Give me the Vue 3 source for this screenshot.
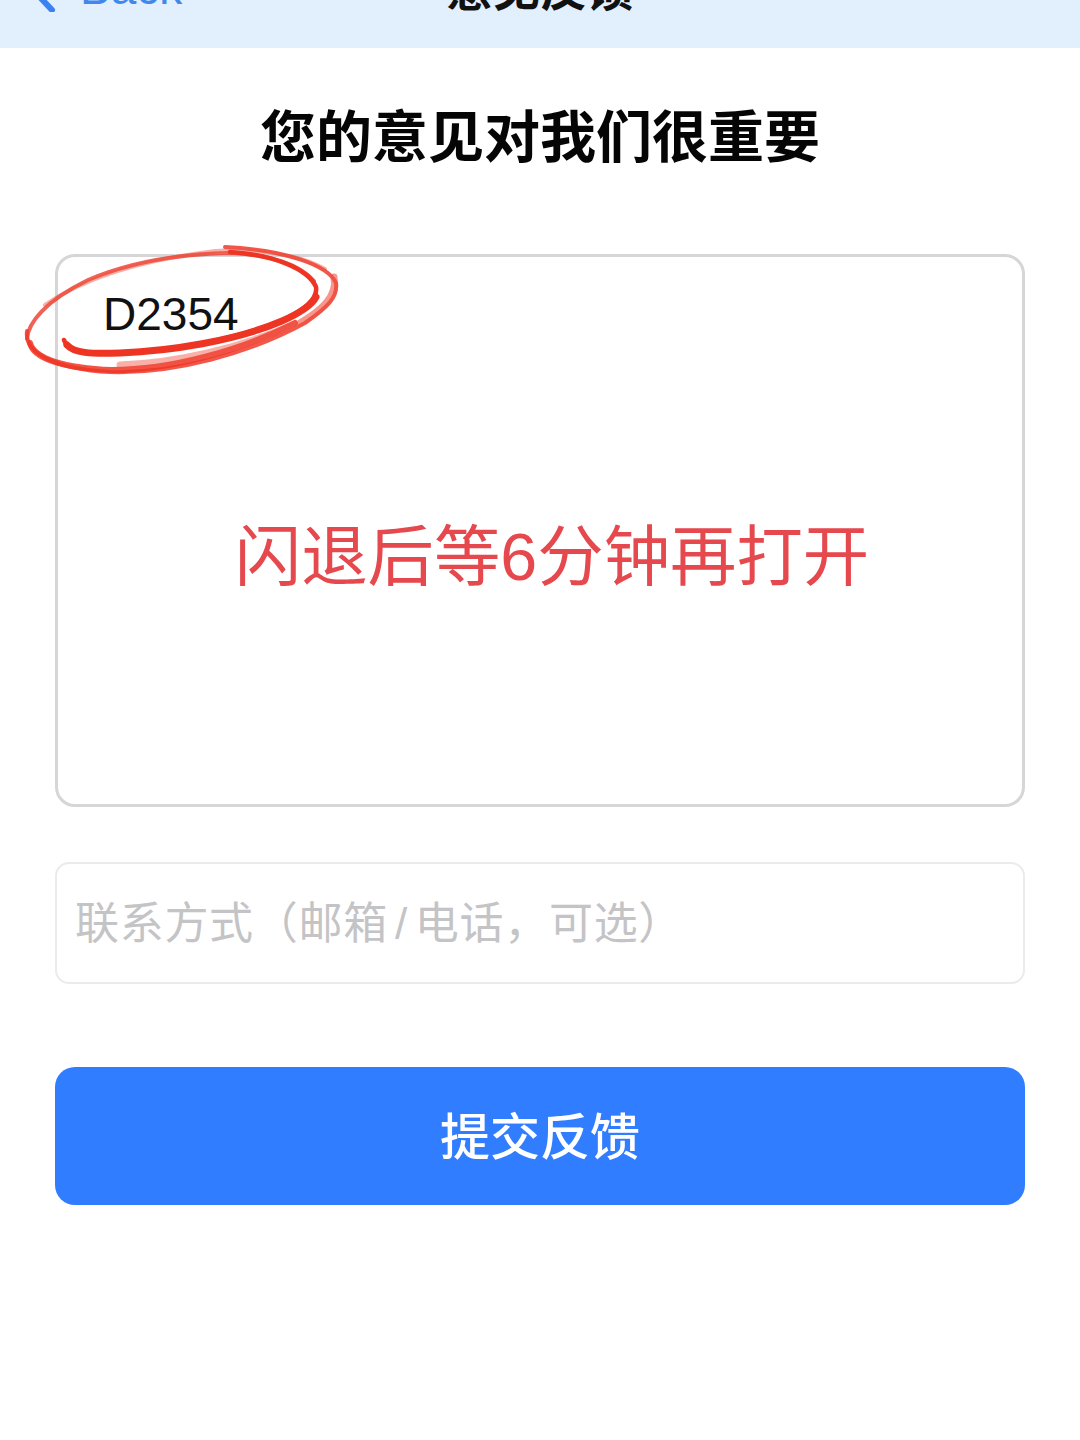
<script setup>
const strokes = [
  { d: 'M27 330 C24 352 55 368 110 371 C175 373 250 352 305 322 C328 306 338 296 336 282 C328 264 285 249 225 246', c: '#ef3a2a', w: 4, o: 0.85 },
  { d: 'M30 342 C34 358 65 367 112 369 C170 369 240 350 295 322', c: '#ee3524', w: 6, o: 0.85 },
  { d: 'M27 338 C28 322 45 300 88 279 C130 261 180 253 230 252 C270 253 300 264 314 280', c: '#ee3a2a', w: 4, o: 0.8 },
  { d: 'M45 304 C88 274 150 258 215 250 C260 247 300 254 325 268', c: '#f0503f', w: 4, o: 0.45 },
  { d: 'M120 364 C180 362 240 346 288 326', c: '#f0503f', w: 7, o: 0.45 },
  { d: 'M334 276 C338 296 320 310 300 322', c: '#f0503f', w: 7, o: 0.6 }
]
</script>

<template>
  <div class="page">
    <header class="nav">
      <div class="back">
        <svg class="chev" width="24" height="44" viewBox="0 0 24 44">
          <path d="M20 10 L5 26 L20 42" fill="none" stroke="#3b82f0" stroke-width="6" stroke-linecap="round" stroke-linejoin="round" />
        </svg>
        <span class="back-text">Back</span>
      </div>
      <div class="nav-title">意见反馈</div>
    </header>

    <main class="content">
      <h1 class="heading">您的意见对我们很重要</h1>

      <div class="card">
        <div class="code">D2354</div>
        <div class="notice">闪退后等6分钟再打开</div>
        <svg class="scribble" width="360" height="160" viewBox="0 230 360 160">
          <g fill="none" stroke-linecap="round" stroke-linejoin="round">
            <path v-for="s in strokes" :key="s.d" :d="s.d" :stroke="s.c" :stroke-width="s.w" :opacity="s.o" />
            <path d="M64 339 C68 352 84 354 120 352 C170 350 240 338 285 318 C305 308 318 298 316 286 C308 268 275 254 230 251" stroke="#ee3524" stroke-width="4.5" />
            <path d="M67 344 C74 352 90 353 120 352 C170 350 235 340 282 320 C300 312 312 304 316 296" stroke="#ee3524" stroke-width="7" />
          </g>
        </svg>
      </div>

      <div class="contact">联系方式（邮箱<span class="slash">/</span>电话，可选）</div>

      <button class="submit" type="button">提交反馈</button>
    </main>
  </div>
</template>

<style scoped>
.page {
  width: 1080px;
  height: 1440px;
  background: #ffffff;
  overflow: hidden;
  font-family: "Liberation Sans", "Noto Sans CJK SC", sans-serif;
}
.nav {
  position: relative;
  height: 48px;
  background: #e2effd;
  overflow: hidden;
}
.back {
  display: flex;
  align-items: center;
  gap: 24px;
  margin-top: -32px;
  padding-left: 32px;
  height: 44px;
}
.chev {
  flex: none;
}
.back-text {
  font-size: 46px;
  line-height: 44px;
  color: #4188ee;
  margin-top: -4px;
}
.nav-title {
  position: absolute;
  left: 0;
  right: 0;
  top: -32px;
  text-align: center;
  font-size: 47px;
  line-height: 44px;
  font-weight: 700;
  color: #111111;
}
.content {
  display: flex;
  flex-direction: column;
  padding: 0 55px;
}
.heading {
  margin: 0;
  padding-top: 55px;
  height: 153px;
  box-sizing: border-box;
  text-align: center;
  font-size: 56px;
  line-height: 70px;
  font-weight: 700;
  color: #050505;
}
.card {
  position: relative;
  margin-top: 53px;
  height: 553px;
  box-sizing: border-box;
  border: 3px solid #d6d6d8;
  border-radius: 20px;
  background: #ffffff;
}
.code {
  position: absolute;
  left: 45px;
  top: 31px;
  font-size: 46px;
  line-height: 52px;
  color: #111111;
}
.notice {
  position: absolute;
  left: 0;
  right: 0;
  top: 260px;
  text-align: center;
  padding-left: 24px;
  font-size: 66.4px;
  line-height: 80px;
  color: #e5484d;
  white-space: nowrap;
}
.scribble {
  position: absolute;
  left: -58px;
  top: -26px;
}
.contact {
  margin-top: 55px;
  height: 122px;
  box-sizing: border-box;
  border: 2px solid #ebebed;
  border-radius: 14px;
  padding-left: 18px;
  font-size: 44px;
  letter-spacing: 0.7px;
  line-height: 120px;
  color: #c4c4c6;
}
.slash {
  margin: 0 7px;
}
.submit {
  margin-top: 83px;
  height: 138px;
  border: none;
  border-radius: 20px;
  padding-bottom: 8px;
  background: #317dff;
  color: #ffffff;
  font-family: inherit;
  font-size: 50px;
  font-weight: 500;
}
</style>
